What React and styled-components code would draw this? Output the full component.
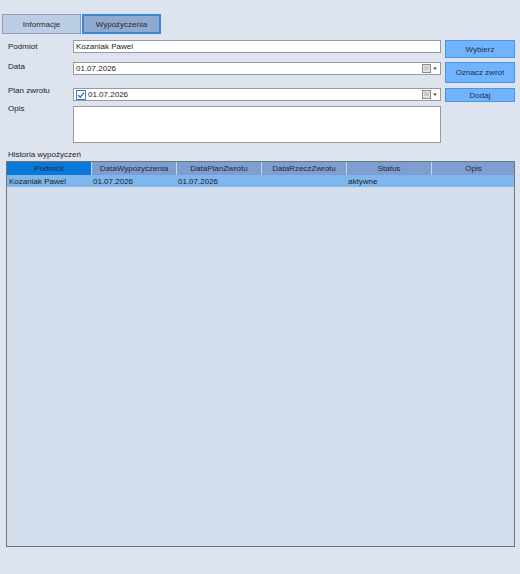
import React from 'react';
import styled, { createGlobalStyle } from 'styled-components';

const Global = createGlobalStyle`
    html, body {
        margin: 0;
        padding: 0;
        background: #dde4ef;
    }
    body {
        font-family: 'Liberation Sans', Arial, sans-serif;
        font-size: 8px;
        color: #1c1c1c;
    }
`

const Window = styled.div`
    width: 520px;
    height: 574px;
    box-sizing: border-box;
    padding: 14px 5px 0 6px;
    display: flex;
    flex-direction: column;
    background: #dde4ef;
`

const Tabs = styled.div`
    display: flex;
    margin-left: -4px;
    height: 20px;
`

const Tab = styled.div`
    width: 79px;
    box-sizing: border-box;
    display: flex;
    align-items: center;
    justify-content: center;
    background: ${p => p.active ? '#8ea9d2' : '#bccde6'};
    border: ${p => p.active ? '2px solid #3d86d8' : '1px solid #8d9db3'};
    margin-right: ${p => p.active ? '0' : '1px'};
    color: #2a2a2a;
`

const Form = styled.div`
    display: grid;
    grid-template-columns: 63px 368px 70px;
    grid-template-rows: 22px 26px 18px 37px;
    column-gap: 4px;
    align-items: start;
    margin-top: 6px;
`

const Label = styled.div`
    padding-left: 2px;
    margin-top: ${p => p.shift || 0}px;
    line-height: 10px;
`

const Field = styled.div`
    height: ${p => p.tall ? 37 : 13}px;
    box-sizing: border-box;
    background: #fff;
    border: 1px solid #9a9a9a;
    display: flex;
    align-items: center;
    padding: 0 2px;
    gap: 2px;
`

const Value = styled.span`
    flex: 1;
    white-space: nowrap;
`

const Button = styled.div`
    height: ${p => p.h}px;
    box-sizing: border-box;
    background: #70b4ff;
    border: 1px solid #4b95e3;
    display: flex;
    align-items: center;
    justify-content: center;
    color: #1f2f4a;
`

const Section = styled.div`
    margin-top: 7px;
    padding-left: 2px;
    line-height: 10px;
`

const Table = styled.div`
    margin-top: 1px;
    height: 386px;
    box-sizing: border-box;
    border: 1px solid #6c7580;
    background: #d5deec;
`

const Row = styled.div`
    display: grid;
    grid-template-columns: 84px 85px 85px 85px 85px 84px;
    height: ${p => p.head ? 13 : 12}px;
    background: ${p => p.head ? '#7e9ecf' : '#7fb6ee'};
`

const HeadCell = styled.div`
    display: flex;
    align-items: center;
    justify-content: center;
    background: ${p => p.selected ? '#0b79d8' : 'transparent'};
    border-left: ${p => p.first ? 'none' : '1px solid #c6d4ea'};
    color: #1d2a40;
    white-space: nowrap;
`

const Cell = styled.div`
    display: flex;
    align-items: center;
    padding-left: 2px;
    white-space: nowrap;
`

function CalendarDrop() {
    return (<svg width="16" height="9" viewBox="0 0 16 9">
        <rect x="0.5" y="0.5" width="8" height="8" fill="#e4e4e4" stroke="#8a8a8a" />
        <line x1="2" y1="3" x2="7" y2="3" stroke="#b0b0b0" />
        <line x1="2" y1="5" x2="7" y2="5" stroke="#b0b0b0" />
        <path d="M11 3.5 L15 3.5 L13 6 Z" fill="#555" />
    </svg>);
}

function Check() {
    return (<svg width="10" height="10" viewBox="0 0 10 10">
        <rect x="0.5" y="0.5" width="9" height="9" fill="#fff" stroke="#3a7bd0" />
        <path d="M2 5 L4.2 7.2 L8 2.6" fill="none" stroke="#2a6ec8" strokeWidth="1.3" />
    </svg>);
}

const columns = ['Podmiot', 'DataWypozyczenia', 'DataPlanZwrotu', 'DataRzeczZwrotu', 'Status', 'Opis'];
const rows = [['Kozaniak Pawel', '01.07.2026', '01.07.2026', '', 'aktywne', '']];

function App() {
    return (<Window>
        <Global />
        <Tabs>
            <Tab>Informacje</Tab>
            <Tab active>Wypożyczenia</Tab>
        </Tabs>
        <Form>
            <Label shift={2}>Podmiot</Label>
            <Field><Value>Kozaniak Pawel</Value></Field>
            <Button h={18}>Wybierz</Button>

            <Label>Data</Label>
            <Field><Value>01.07.2026</Value><CalendarDrop /></Field>
            <Button h={21}>Oznacz zwrot</Button>

            <Label shift={-2}>Plan zwrotu</Label>
            <Field><Check /><Value>01.07.2026</Value><CalendarDrop /></Field>
            <Button h={14}>Dodaj</Button>

            <Label shift={-2}>Opis</Label>
            <Field tall />
            <div />
        </Form>
        <Section>Historia wypożyczeń</Section>
        <Table>
            <Row head>
                {columns.map((c, i) => <HeadCell key={c} first={i === 0} selected={i === 0}>{c}</HeadCell>)}
            </Row>
            {rows.map((r, i) => <Row key={i}>
                {r.map((v, j) => <Cell key={j}>{v}</Cell>)}
            </Row>)}
        </Table>
    </Window>);
}

export default App;
